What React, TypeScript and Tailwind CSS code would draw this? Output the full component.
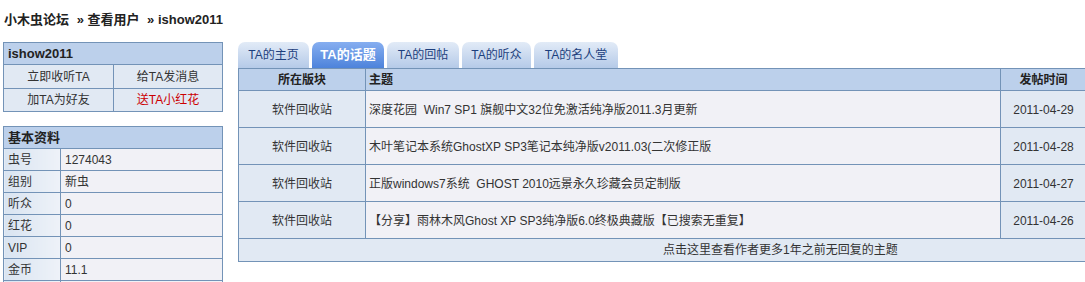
import React from "react";

const font = { fontFamily: '"Liberation Sans", "Noto Sans CJK SC", sans-serif' };

const tabs = [
  { label: "TA的主页", w: "w-[71px]" },
  { label: "TA的话题", w: "w-[72px]", active: true },
  { label: "TA的回帖", w: "w-[72px]" },
  { label: "TA的听众", w: "w-[69px]" },
  { label: "TA的名人堂", w: "w-[84px]" },
];

const topics = [
  { forum: "软件回收站", title: "深度花园  Win7 SP1 旗舰中文32位免激活纯净版2011.3月更新", date: "2011-04-29" },
  { forum: "软件回收站", title: "木叶笔记本系统GhostXP SP3笔记本纯净版v2011.03(二次修正版", date: "2011-04-28" },
  { forum: "软件回收站", title: "正版windows7系统  GHOST 2010远景永久珍藏会员定制版", date: "2011-04-27" },
  { forum: "软件回收站", title: "【分享】雨林木风Ghost XP SP3纯净版6.0终极典藏版【已搜索无重复】", date: "2011-04-26" },
];

const info = [
  ["虫号", "1274043"],
  ["组别", "新虫"],
  ["听众", "0"],
  ["红花", "0"],
  ["VIP", "0"],
  ["金币", "11.1"],
  ["", ""],
];

export default function App() {
  return (
    <div className="w-[1085px] h-[282px] overflow-hidden bg-white text-[12px] text-[#333]" style={font}>
      {/* breadcrumb */}
      <div className="pt-[10px] pl-[4px] h-[28px] text-[13px] font-bold text-[#222]">
        小木虫论坛 <span className="ml-[4px]">» 查看用户</span> <span className="ml-[4px]">» ishow2011</span>
      </div>

      <div className="flex mt-[14px]">
        {/* left column */}
        <div className="w-[220px] ml-[3px] shrink-0">
          <table className="w-full border-collapse border border-[#7393b7]">
            <tbody>
              <tr className="h-[22px] bg-[#bcd0eb]">
                <td colSpan={2} className="border border-[#7393b7] pl-[4px] font-bold text-[13px] text-[#222]">
                  ishow2011
                </td>
              </tr>
              <tr className="h-[24px] bg-[#e1e9f3] text-center">
                <td className="w-[110px] border border-[#7393b7]">立即收听TA</td>
                <td className="border border-[#7393b7]">给TA发消息</td>
              </tr>
              <tr className="h-[23px] bg-[#e1e9f3] text-center">
                <td className="border border-[#7393b7]">加TA为好友</td>
                <td className="border border-[#7393b7] text-[#cc0000]">送TA小红花</td>
              </tr>
            </tbody>
          </table>

          <table className="w-full mt-[14px] border-collapse border border-[#7393b7]">
            <tbody>
              <tr className="h-[22px] bg-[#bcd0eb]">
                <td colSpan={2} className="border border-[#7393b7] pl-[4px] font-bold text-[13px] text-[#222]">
                  基本资料
                </td>
              </tr>
              {info.map(([k, v], i) => (
                <tr key={i} className="h-[22px]">
                  <td className="w-[57px] border border-[#7393b7] pl-[4px] bg-gradient-to-r from-[#d9e4f1] to-[#eef2f8]">
                    {k}
                  </td>
                  <td className="border border-[#7393b7] pl-[4px] bg-[#f1f1f6]">{v}</td>
                </tr>
              ))}
            </tbody>
          </table>
        </div>

        {/* right column */}
        <div className="ml-[15px] w-[849px] shrink-0">
          <div className="flex items-end h-[26px] gap-[3px]">
            {tabs.map((t) =>
              t.active ? (
                <div
                  key={t.label}
                  className={`${t.w} h-[26px] rounded-t-[7px] bg-gradient-to-b from-[#86aef0] to-[#4d83db] text-white font-bold text-[13px] flex items-center justify-center`}
                >
                  {t.label}
                </div>
              ) : (
                <div
                  key={t.label}
                  className={`${t.w} h-[26px] rounded-t-[7px] bg-gradient-to-b from-[#e2ebf7] to-[#b5cae8] text-[#1d3f7d] flex items-center justify-center`}
                >
                  {t.label}
                </div>
              )
            )}
          </div>

          <table className="w-full border-collapse border border-[#7393b7] table-fixed">
            <tbody>
              <tr className="h-[22px] bg-[#bcd0eb] font-bold text-[#222]">
                <td className="w-[127px] border border-[#7393b7] text-center">所在版块</td>
                <td className="w-[635px] border border-[#7393b7] pl-[3px]">主题</td>
                <td className="border border-[#7393b7] text-center">发帖时间</td>
              </tr>
              {topics.map((t) => (
                <tr key={t.date} className="h-[37px]">
                  <td className="border border-[#7393b7] bg-[#e1e9f3] text-center align-top pt-[10px]">{t.forum}</td>
                  <td className="border border-[#7393b7] bg-[#f1f1f6] pl-[3px] align-top pt-[10px] whitespace-pre overflow-hidden">
                    {t.title}
                  </td>
                  <td className="border border-[#7393b7] bg-[#e1e9f3] text-center align-top pt-[10px]">{t.date}</td>
                </tr>
              ))}
              <tr className="h-[23px] bg-[#e1e9f3]">
                <td colSpan={3} className="border border-[#7393b7] pl-[424px]">
                  点击这里查看作者更多1年之前无回复的主题
                </td>
              </tr>
            </tbody>
          </table>
        </div>
      </div>
    </div>
  );
}
